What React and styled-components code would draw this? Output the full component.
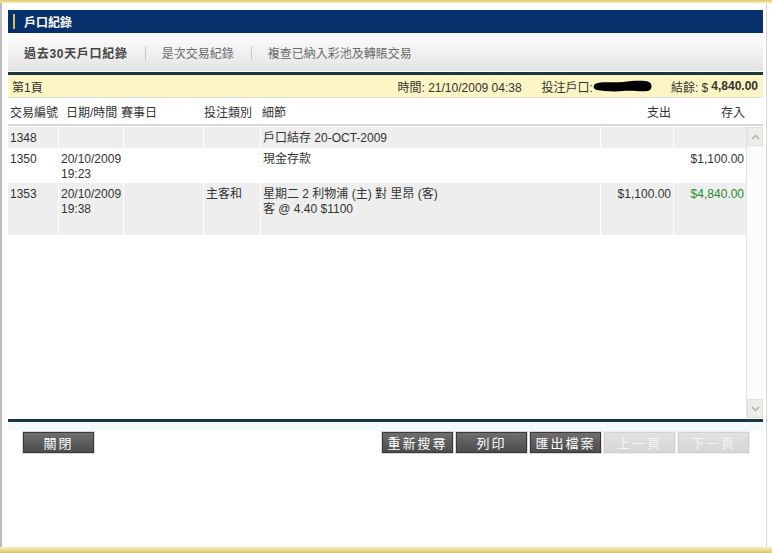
import { createGlobalStyle, styled } from "styled-components";

const GlobalStyle = createGlobalStyle`
  html, body {
    margin: 0;
    padding: 0;
    background: #ffffff;
  }
  body {
    font-family: "Liberation Sans", Arial, "Noto Sans CJK TC", sans-serif;
    font-size: 12px;
    color: #333;
  }
`;

const Screen = styled.div`
  width: 772px;
  height: 553px;
  display: flex;
  flex-direction: column;
  background: #fff;
  overflow: hidden;
`;

const Stripe = styled.div`
  flex: none;
  height: ${(p) => p.$h}px;
  background: linear-gradient(${(p) => (p.$top ? "#e2cb6c, #f6ebb4" : "#f8f0c4, #dcc46a")});
`;

const Page = styled.div`
  flex: 1;
  width: 755px;
  border-left: 2px solid #bcbcbc;
  border-right: 1px solid #d6d6d6;
  padding: 7px 3px 0 6px;
  display: flex;
  flex-direction: column;
`;

const TitleBar = styled.div`
  height: 23px;
  background: #07316c;
  display: flex;
  align-items: center;
  padding-left: 5px;
  gap: 9px;
  color: #fff;
  font-weight: bold;
  font-size: 12px;
`;

const TitleMark = styled.span`
  width: 2px;
  height: 15px;
  background: #d8bd5a;
`;

const TabBar = styled.div`
  margin-top: 1px;
  height: 37px;
  background: linear-gradient(#fdfdfd, #e4e4e4);
  display: flex;
  align-items: center;
  padding-left: 16px;
  font-size: 12px;
`;

const Tab = styled.span`
  color: ${(p) => (p.$active ? "#444" : "#6a6a6a")};
  font-weight: ${(p) => (p.$active ? "bold" : "normal")};
  letter-spacing: ${(p) => (p.$active ? "0.7px" : "0")};
`;

const TabSep = styled.span`
  width: 1px;
  height: 14px;
  background: #c8c8c8;
  margin: 0 16px 0 17px;
`;

const Rule = styled.div`
  height: 3px;
  margin-top: ${(p) => p.$mt || 0}px;
  background: #183846;
`;

const InfoBar = styled.div`
  height: 22px;
  background: #fdf5c4;
  border-bottom: 1px solid #ddd;
  display: flex;
  align-items: center;
  padding: 0 5px 0 4px;
  color: #333;
`;

const InfoItem = styled.span`
  display: flex;
  align-items: center;
  margin-left: ${(p) => p.$ml || 0}px;
  white-space: pre;
`;

const Spacer = styled.span`
  flex: 1;
`;

const Bold = styled.b`
  font-weight: bold;
  margin-left: 3px;
`;

const HeadRow = styled.div`
  height: 26px;
  display: grid;
  grid-template-columns: 56px 55px 83px 58px 1fr 73px 74px 16px;
  align-items: center;
  border-bottom: 2px solid #d8d8d8;
  margin-bottom: 1px;
`;

const HeadCell = styled.div`
  padding: 0 2px;
  text-align: ${(p) => (p.$right ? "right" : "left")};
  white-space: nowrap;
`;

const BodyArea = styled.div`
  height: 291px;
  display: flex;
`;

const Rows = styled.div`
  flex: 1;
  display: flex;
  flex-direction: column;
`;

const Row = styled.div`
  display: grid;
  grid-template-columns: 50px 65px 80px 57px 1fr 73px 73px;
  height: ${(p) => p.$h}px;
  background: ${(p) => (p.$shade ? "#eeeeee" : "#ffffff")};
`;

const Cell = styled.div`
  padding: 4px 2px 0 3px;
  line-height: 15px;
  border-left: ${(p) => (p.$first ? "none" : "1px solid #fff")};
  text-align: ${(p) => (p.$right ? "right" : "left")};
  color: ${(p) => (p.$green ? "#2a8a2a" : "#333")};
  padding-left: ${(p) => (p.$first ? 2 : 2)}px;
`;

const ScrollBar = styled.div`
  width: 16px;
  background: #fbfbfb;
  border-left: 1px solid #e4e4e4;
  display: flex;
  flex-direction: column;
  justify-content: space-between;
`;

const ScrollBtn = styled.div`
  height: 17px;
  background: #eeeee8;
  border: 1px solid #e0e0da;
  display: flex;
  align-items: center;
  justify-content: center;
`;

const Band = styled.div`
  height: 9px;
  background: #f3fafb;
`;

const ButtonRow = styled.div`
  display: flex;
  padding: 1px 14px 0 15px;
  gap: 3px;
`;

const Button = styled.button`
  width: 71px;
  height: 21px;
  padding: 0;
  font-family: "Liberation Sans", "Noto Sans CJK TC", sans-serif;
  font-size: 13px;
  letter-spacing: 2px;
  color: ${(p) => (p.disabled ? "#f4f4f4" : "#fff")};
  background: ${(p) =>
    p.disabled ? "linear-gradient(#e2e2e2, #d6d6d6)" : "linear-gradient(#6e6e6e, #4c4c4c)"};
  border: 1px solid ${(p) => (p.disabled ? "#d0d0d0" : "#3a3a3a")};
  box-shadow: 0 0 0 1px ${(p) => (p.disabled ? "#eee" : "#d8d8d8")};
  cursor: default;
`;

const Redact = () => (
  <svg width="60" height="14" viewBox="0 0 60 14">
    <path
      d="M2 5 C8 2 20 4 30 3 C40 2 50 1 56 3 C60 5 59 11 55 12 C46 13 40 11 30 12 C20 13 10 12 4 11 C0 10 0 7 2 5 Z"
      fill="#000"
    />
  </svg>
);

const Chevron = ({ up }) => (
  <svg width="9" height="6" viewBox="0 0 9 6">
    <path
      d={up ? "M1 5 L4.5 1.5 L8 5" : "M1 1 L4.5 4.5 L8 1"}
      fill="none"
      stroke="#b0b0a8"
      strokeWidth="1.5"
    />
  </svg>
);

const rows = [
  { id: "1348", date: [], type: "", detail: ["戶口結存 20-OCT-2009"], out: "", inn: "", h: 21, shade: true },
  { id: "1350", date: ["20/10/2009", "19:23"], type: "", detail: ["現金存款"], out: "", inn: "$1,100.00", h: 35 },
  {
    id: "1353",
    date: ["20/10/2009", "19:38"],
    type: "主客和",
    detail: ["星期二 2 利物浦 (主) 對 里昂 (客)", "客 @ 4.40 $1100"],
    out: "$1,100.00",
    inn: "$4,840.00",
    green: true,
    h: 52,
    shade: true,
  },
];

const Lines = ({ lines }) => lines.map((l) => <div key={l}>{l}</div>);

export default function App() {
  return (
    <Screen>
      <GlobalStyle />
      <Stripe $h={3} $top />
      <Page>
        <TitleBar>
          <TitleMark />
          戶口紀錄
        </TitleBar>
        <TabBar>
          <Tab $active>過去30天戶口紀錄</Tab>
          <TabSep />
          <Tab>是次交易紀錄</Tab>
          <TabSep />
          <Tab>複查已納入彩池及轉賬交易</Tab>
        </TabBar>
        <Rule $mt={1} />
        <InfoBar>
          <span>第1頁</span>
          <Spacer />
          <InfoItem>時間: 21/10/2009 04:38</InfoItem>
          <InfoItem $ml={20}>
            投注戶口:
            <Redact />
          </InfoItem>
          <InfoItem $ml={18}>
            結餘: $<Bold>4,840.00</Bold>
          </InfoItem>
        </InfoBar>
        <HeadRow>
          <HeadCell>交易編號</HeadCell>
          <HeadCell>日期/時間</HeadCell>
          <HeadCell>賽事日</HeadCell>
          <HeadCell>投注類別</HeadCell>
          <HeadCell>細節</HeadCell>
          <HeadCell $right>支出</HeadCell>
          <HeadCell $right>存入</HeadCell>
          <span />
        </HeadRow>
        <BodyArea>
          <Rows>
            {rows.map((r) => (
              <Row key={r.id} $h={r.h} $shade={r.shade}>
                <Cell $first>{r.id}</Cell>
                <Cell>
                  <Lines lines={r.date} />
                </Cell>
                <Cell />
                <Cell>{r.type}</Cell>
                <Cell>
                  <Lines lines={r.detail} />
                </Cell>
                <Cell $right>{r.out}</Cell>
                <Cell $right $green={r.green}>
                  {r.inn}
                </Cell>
              </Row>
            ))}
          </Rows>
          <ScrollBar>
            <ScrollBtn>
              <Chevron up />
            </ScrollBtn>
            <ScrollBtn>
              <Chevron />
            </ScrollBtn>
          </ScrollBar>
        </BodyArea>
        <Rule $mt={1} />
        <Band />
        <ButtonRow>
          <Button>關閉</Button>
          <Spacer />
          <Button>重新搜尋</Button>
          <Button>列印</Button>
          <Button>匯出檔案</Button>
          <Button disabled>上一頁</Button>
          <Button disabled>下一頁</Button>
        </ButtonRow>
      </Page>
      <Stripe $h={6} />
    </Screen>
  );
}
